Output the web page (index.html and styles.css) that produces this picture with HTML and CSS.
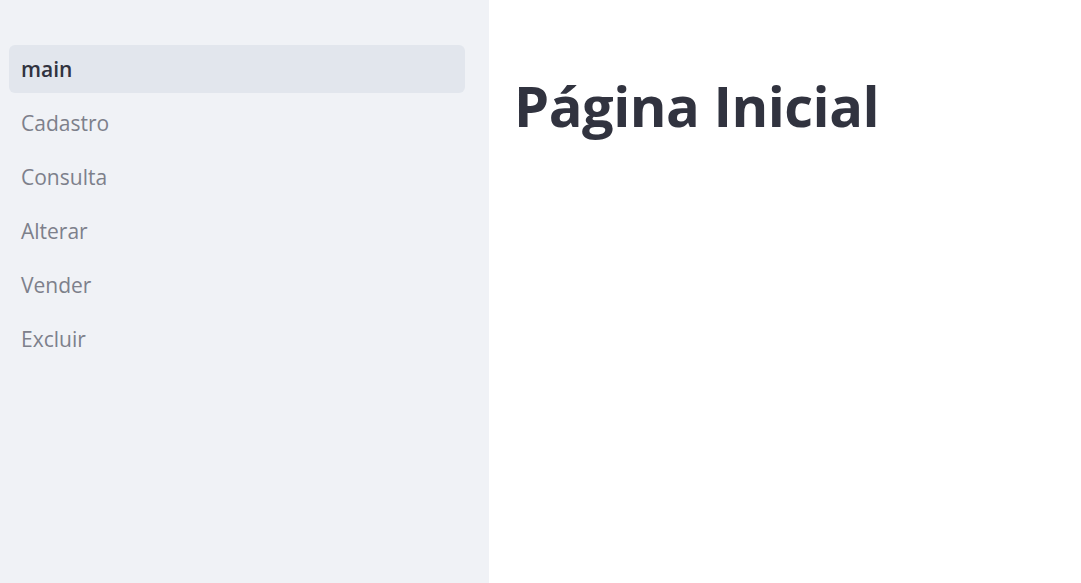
FILE: index.html
```html
<!DOCTYPE html>
<html lang="pt">
<head>
<meta charset="utf-8">
<link rel="stylesheet" href="styles.css">
</head>
<body>
<div class="app">
  <aside class="sidebar">
    <nav class="nav">
      <a class="nav-item active">main</a>
      <a class="nav-item">Cadastro</a>
      <a class="nav-item">Consulta</a>
      <a class="nav-item">Alterar</a>
      <a class="nav-item">Vender</a>
      <a class="nav-item">Excluir</a>
    </nav>
  </aside>
  <main class="content">
    <h1 class="title">Página Inicial</h1>
  </main>
</div>
</body>
</html>
```
FILE: styles.css
```css
html, body {
  margin: 0;
  padding: 0;
  height: 100%;
  background: #ffffff;
}
.app {
  display: flex;
  height: 100%;
  font-family: "Open Sans", "Noto Sans", sans-serif;
}
.sidebar {
  width: 489px;
  flex: none;
  background: #f0f2f6;
  padding: 45px 24px 0 9px;
  box-sizing: border-box;
}
.nav {
  display: flex;
  flex-direction: column;
  gap: 6px;
}
.nav-item {
  display: flex;
  align-items: center;
  height: 48px;
  padding: 0 12px;
  border-radius: 6px;
  font-size: 21px;
  color: #7d808b;
}
.nav-item.active {
  background: #e2e6ed;
  color: #31333f;
  font-weight: 600;
}
.content {
  flex: 1;
  padding: 72px 0 0 25px;
}
.title {
  margin: 0;
  font-size: 56px;
  font-weight: 700;
  color: #31333f;
  line-height: 1.2;
  letter-spacing: -0.5px;
}
```
